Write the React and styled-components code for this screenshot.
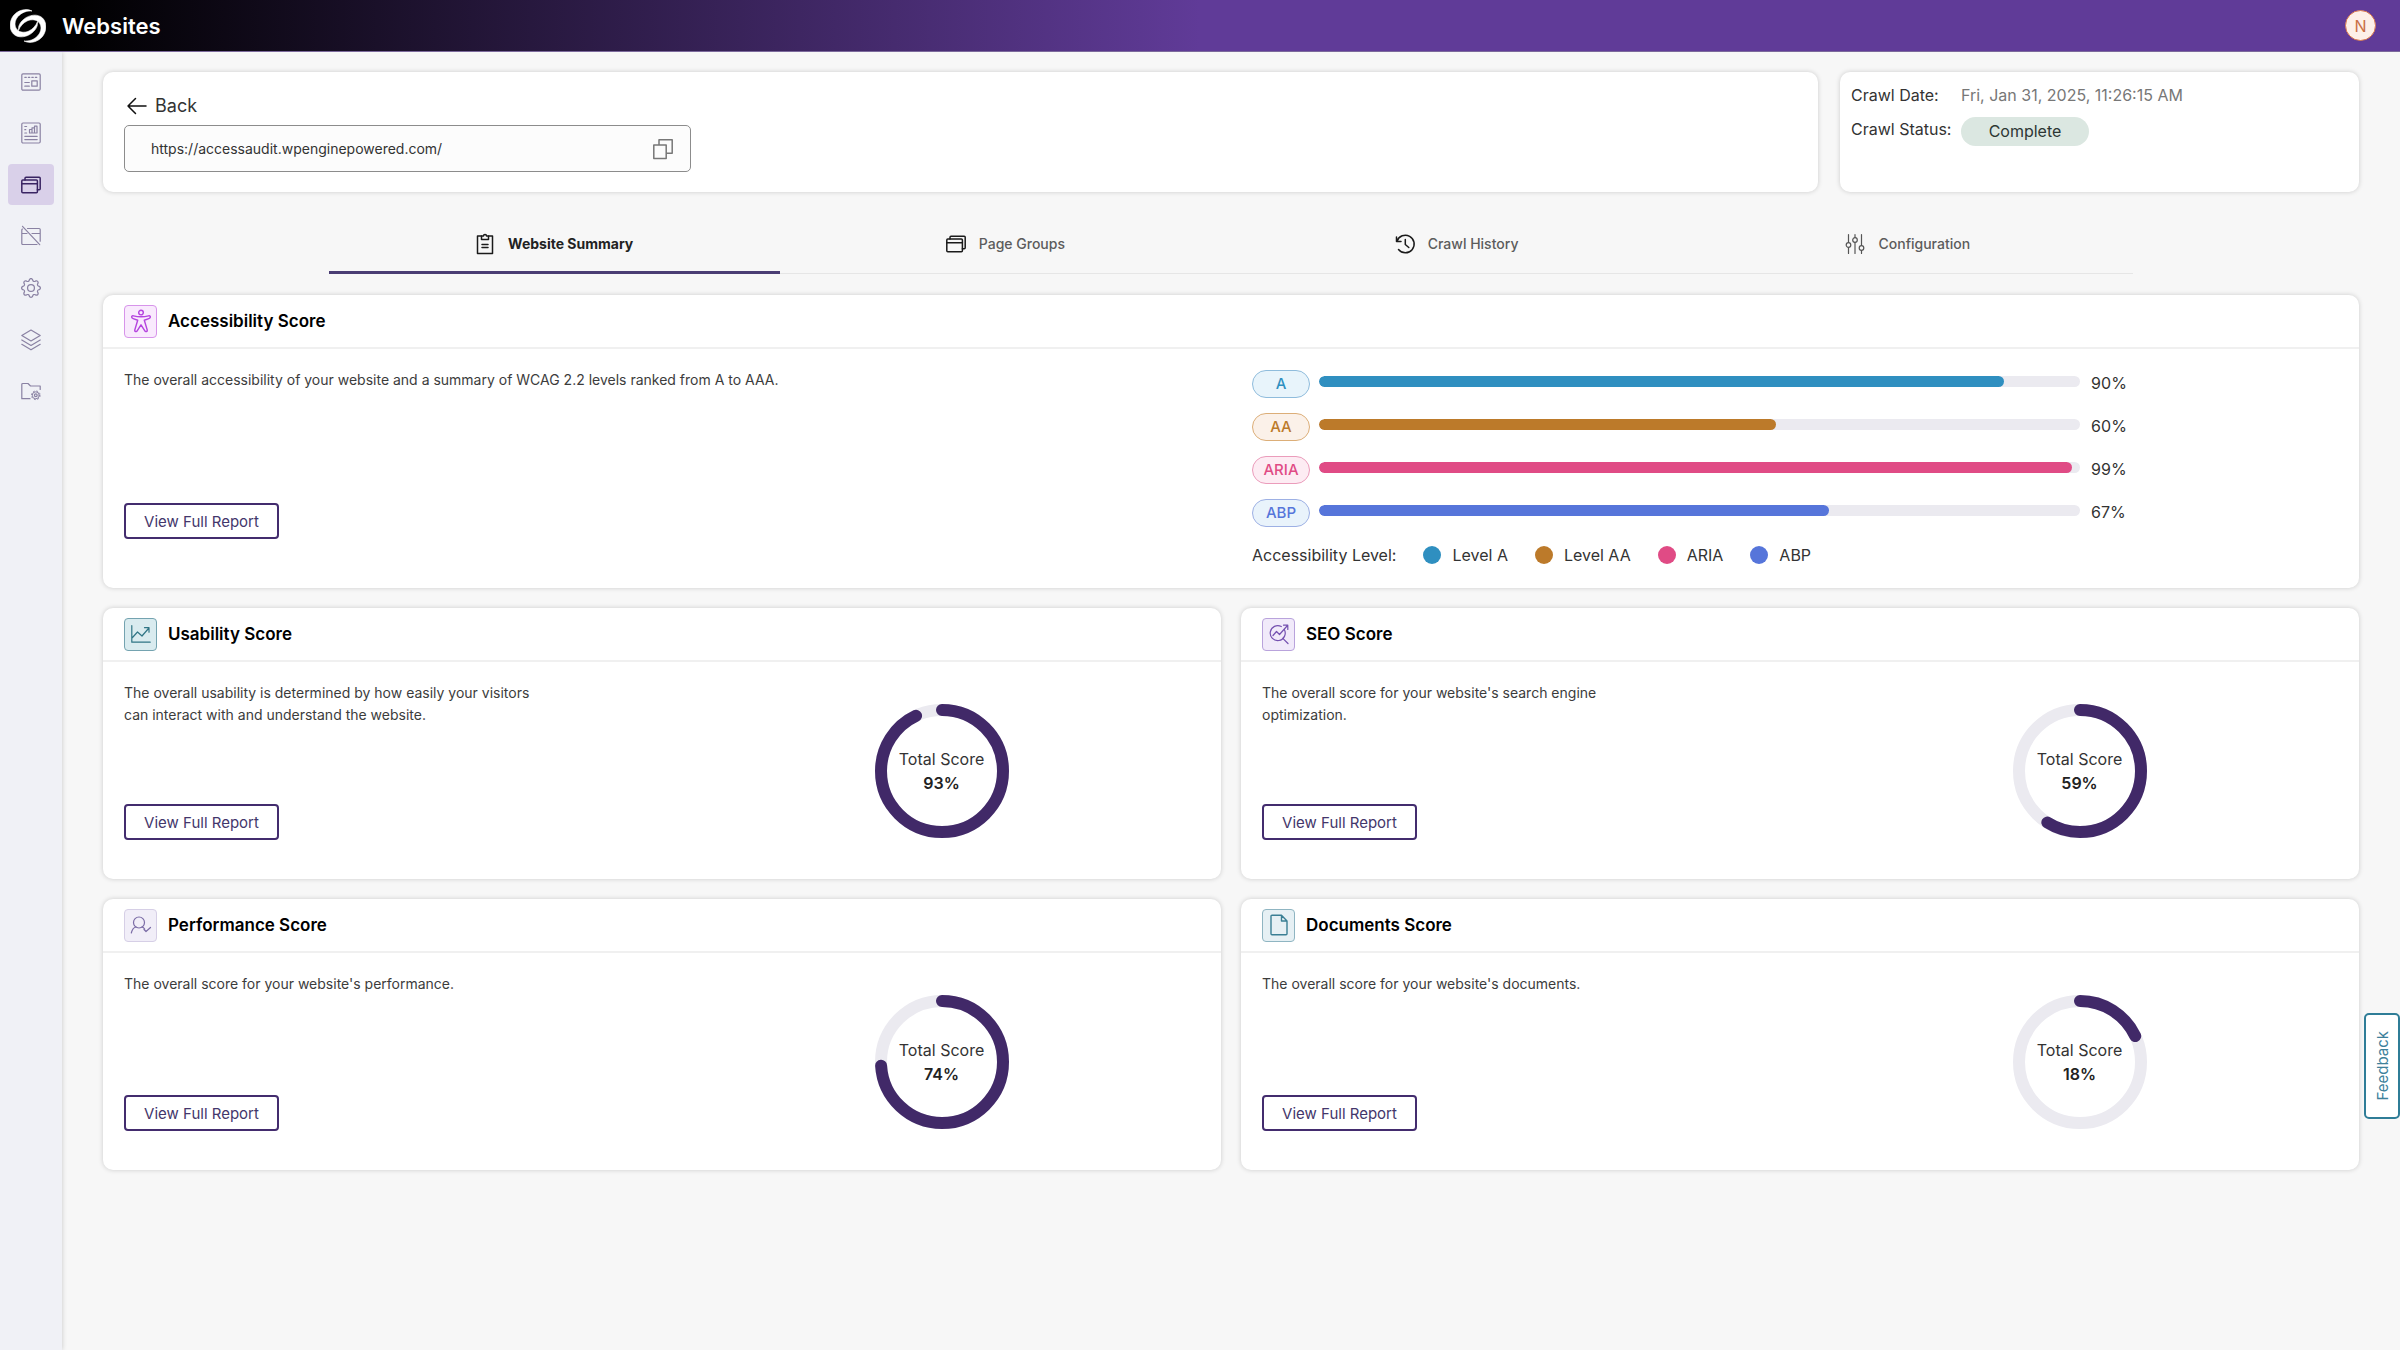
import { useState } from "react";
import styled, { createGlobalStyle } from "styled-components";
import { BsGear } from "react-icons/bs";

const GlobalStyle = createGlobalStyle`
  *, *::before, *::after {
    box-sizing: border-box;
  }
  body {
    margin: 0;
    background: #f7f7f7;
    color: #333;
    font-family: Inter, "Liberation Sans", sans-serif;
    font-size: 14px;
    line-height: 22px;
  }
  button, input {
    font-family: inherit;
  }
  h1, h2, p, dl, dd, ul {
    margin: 0;
    padding: 0;
  }
`;

const Page = styled.div`
  display: flex;
  flex-direction: column;
  min-height: 100vh;
`;

const TopBar = styled.header`
  display: flex;
  align-items: center;
  height: 52px;
  padding: 0 24px 0 10px;
  border-bottom: 1px solid #7c6a9c;
  background: linear-gradient(90deg, #000 3%, #603b98 50%);
  color: #fff;
`;

const PageTitle = styled.h1`
  margin-left: 16px;
  font-size: 22px;
  font-weight: 600;
  line-height: 28px;
`;

const Avatar = styled.button`
  width: 31px;
  height: 31px;
  margin-left: auto;
  padding: 0;
  border: 1px solid #d9794f;
  border-radius: 50%;
  background: #fdf0e8;
  color: #c96f45;
  font-size: 16px;
`;

const Shell = styled.div`
  display: flex;
  flex: 1;
`;

const Sidebar = styled.nav`
  flex: 0 0 62px;
  padding: 9px 8px;
  background: #f0f1f6;
  box-shadow: 0 0 5px rgba(0, 0, 0, 0.2);
  clip-path: inset(0 -8px 0 0);
`;

const NavList = styled.ul`
  display: flex;
  flex-direction: column;
  justify-content: space-between;
  height: 351px;
  list-style: none;
`;

const NavLink = styled.a`
  display: flex;
  align-items: center;
  justify-content: center;
  height: 41px;
  border-radius: 4px;
  background: ${({ $active }) => ($active ? "#d9d0e9" : "transparent")};
  color: ${({ $active }) => ($active ? "#3a2463" : "#8a82a3")};
`;

const Main = styled.main`
  flex: 1;
  min-width: 0;
  padding: 20px 41px;
`;

const Card = styled.section`
  border-radius: 10px;
  background: #fff;
  box-shadow: 0 0 5px rgba(0, 0, 0, 0.18);
`;

const TopCards = styled.div`
  display: grid;
  grid-template-columns: 76fr 23fr;
  gap: 22px;
`;

const SiteCard = styled(Card)`
  padding: 22px 21px 20px;
`;

const BackLink = styled.a`
  display: flex;
  align-items: center;
  gap: 8px;
  width: fit-content;
  padding-left: 3px;
  color: #333;
  font-size: 18px;
  line-height: 24px;
  text-decoration: none;
  svg {
    color: #111;
  }
`;

const UrlField = styled.div`
  display: flex;
  align-items: center;
  width: 567px;
  max-width: 100%;
  height: 47px;
  margin-top: 7px;
  padding: 0 13px 0 26px;
  border: 1px solid #8c8c8c;
  border-radius: 5px;
  background: #fcfcfc;
`;

const UrlInput = styled.input`
  flex: 1;
  min-width: 0;
  padding: 0;
  border: 0;
  outline: 0;
  background: transparent;
  color: #333;
  font-size: 14px;
`;

const CopyButton = styled.button`
  display: flex;
  padding: 4px;
  border: 0;
  background: none;
  color: #777;
`;

const CrawlCard = styled(Card)`
  padding: 11px;
`;

const CrawlInfo = styled.dl`
  display: grid;
  grid-template-columns: 110px 1fr;
  row-gap: 10px;
  font-size: 16px;
  line-height: 24px;
  dd {
    color: #777;
  }
`;

const StatusPill = styled.span`
  display: inline-block;
  min-width: 128px;
  border-radius: 15px;
  background: #dbe7e1;
  color: #2c3634;
  line-height: 29px;
  text-align: center;
`;

const Tabs = styled.div`
  display: grid;
  grid-template-columns: repeat(4, 1fr);
  width: 80%;
  margin: 20px auto 21px;
  border-bottom: 1px solid #e6e6e6;
`;

const Tab = styled.button`
  display: flex;
  align-items: center;
  justify-content: center;
  gap: 13px;
  height: 62px;
  margin-bottom: -1px;
  padding: 4px 0 0;
  border: 0;
  border-bottom: 3px solid ${({ $active }) => ($active ? "#4a3d74" : "transparent")};
  background: none;
  color: ${({ $active }) => ($active ? "#222" : "#5c5c5c")};
  font-size: 14px;
  font-weight: ${({ $active }) => ($active ? 700 : 500)};
  svg {
    color: ${({ $muted }) => ($muted ? "#555" : "#1a1a1a")};
  }
`;

const CardHeader = styled.div`
  display: flex;
  align-items: center;
  gap: 11px;
  height: 54px;
  padding: 0 21px;
  border-bottom: 2px solid #f0f0f0;
`;

const CardTitle = styled.h2`
  color: #000;
  font-size: 17px;
  font-weight: 600;
  line-height: 24px;
`;

const IconTile = styled.span`
  display: flex;
  align-items: center;
  justify-content: center;
  width: 33px;
  height: 33px;
  border: 1px solid ${({ $tone }) => $tone.border};
  border-radius: 4px;
  background: ${({ $tone }) => $tone.background};
  color: ${({ $tone }) => $tone.color};
`;

const CardBody = styled.div`
  display: grid;
  grid-template-columns: 1fr 1fr;
`;

const Summary = styled.div`
  padding: ${({ $tall }) => ($tall ? "20px 21px 49px" : "20px 21px 39px")};
`;

const Description = styled.p`
  max-width: ${({ $tall }) => ($tall ? "none" : "412px")};
  min-height: ${({ $tall }) => ($tall ? "134px" : "122px")};
  color: #3c3c3c;
`;

const ReportButton = styled.button`
  min-width: 155px;
  height: 36px;
  padding: 0 16px;
  border: 2px solid #432c6e;
  border-radius: 4px;
  background: #fff;
  color: #43366b;
  font-size: 15px;
`;

const ScoreGrid = styled.div`
  display: grid;
  grid-template-columns: 1fr 1fr;
  gap: 20px;
  margin-top: 20px;
`;

const RingBox = styled.div`
  display: grid;
  place-items: center;
  > * {
    grid-area: 1 / 1;
  }
`;

const RingText = styled.div`
  color: #333;
  font-size: 16px;
  line-height: 24px;
  text-align: center;
  strong {
    display: block;
    color: #222;
    font-weight: 600;
  }
`;

const Levels = styled.div`
  width: calc(79% - 16px);
  margin: 21px 0 0 21px;
`;

const LevelRow = styled.div`
  display: grid;
  grid-template-columns: 58px 1fr 36px;
  align-items: start;
  height: 28px;
  margin-bottom: 15px;
  font-size: 16px;
  line-height: 26px;
`;

const LevelBadge = styled.span`
  border: 1px solid ${({ $level }) => $level.border};
  border-radius: 14px;
  background: ${({ $level }) => $level.background};
  color: ${({ $level }) => $level.color};
  font-size: 15px;
  font-weight: 500;
  text-align: center;
`;

const Track = styled.div`
  height: 11px;
  margin: 6px 11px 0 9px;
  border-radius: 6px;
  background: #ebeaf0;
  overflow: hidden;
`;

const Fill = styled.div`
  height: 100%;
  border-radius: 6px;
  background: ${({ $color }) => $color};
`;

const Legend = styled.div`
  display: flex;
  align-items: center;
  gap: 27px;
  margin-top: 16px;
  font-size: 16px;
  line-height: 24px;
`;

const LegendItem = styled.span`
  display: flex;
  align-items: center;
  gap: 11px;
  &::before {
    content: "";
    width: 18px;
    height: 18px;
    border-radius: 50%;
    background: ${({ $color }) => $color};
  }
`;

const Feedback = styled.button`
  position: fixed;
  top: 75%;
  right: 0;
  width: 36px;
  height: 106px;
  padding: 0;
  border: 2px solid #2f7d97;
  border-radius: 5px;
  background: #fff;
  color: #3d819b;
  font-size: 15px;
  writing-mode: sideways-lr;
`;

function Icon({ size = 20, width = 1.2, children }) {
  return (
    <svg
      width={size}
      height={size}
      viewBox="0 0 20 20"
      fill="none"
      stroke="currentColor"
      strokeWidth={width}
      strokeLinecap="round"
      strokeLinejoin="round"
      overflow="visible"
      aria-hidden="true"
    >
      {children}
    </svg>
  );
}

function Logo() {
  return (
    <svg width="36" height="34" viewBox="0 0 36 34" fill="#fff" stroke="#fff" strokeWidth=".6" aria-hidden="true">
      <path d="M22 2C16-1 8 1 3.500 6.500C-1 12.500-1 20.500 3.500 25C8 29.500 17 28.500 22.500 23.500C26 20.500 28 17 27.500 12.500C26 16.500 23 20 19 22C14.500 24 9.500 23.500 7 20.500C4 17 4.500 11.500 8 7.500C11.500 3.500 17 1.500 22 2z" />
      <path d="M14 32C20 35 28 33 32.500 27.500C37 21.500 37 13.500 32.500 9C28 4.500 19 5.500 13.500 10.500C10 13.500 8 17 8.500 21.500C10 17.500 13 14 17 12C21.500 10 26.500 10.500 29 13.500C32 17 31.500 22.500 28 26.500C24.500 30.500 19 32.500 14 32z" />
    </svg>
  );
}

const dashboard = (
  <Icon>
    <rect x=".8" y="1.800" width="18.400" height="16.400" rx="1.200" />
    <path d="M3.800 5.300h1.500M7.300 5.300h1.500M10.800 5.300h1.500M14.300 5.300h1.500M3.800 10.500h4.500M3.800 14.200h4.500" />
    <rect x="10.800" y="8.800" width="5.400" height="5.400" />
  </Icon>
);

const report = (
  <Icon>
    <rect x=".8" y="0" width="18.400" height="20" rx="1.200" />
    <path d="M3.800 3.500h1.800M3.800 6.700h1M3.800 10h1.800M3.800 13.300h12.400M3.800 16.600h12.400" />
    <path d="M8.500 10V6.500H11V10zM11 6.500V4.800h2.500V10M13.500 4.800V3.200H16V10H8.500" />
  </Icon>
);

const windowsShape = (
  <>
    <rect x=".8" y="5" width="15.600" height="12.700" rx="1" />
    <path d="M.8 8.700h15.600M4 5V3.300a1 1 0 0 1 1-1h13.200a1 1 0 0 1 1 1v10.400a1 1 0 0 1-1 1h-1.800" />
  </>
);

const blocked = (
  <Icon>
    <path d="M1.500.3l17.200 18.400M1.500 3a1 1 0 0 0-.7 1v13.500a1 1 0 0 0 1 1H16M6.500 2.500H18.200a1 1 0 0 1 1 1v11.700M.8 7.500H6M11 7.500h8" />
  </Icon>
);

const layers = (
  <Icon>
    <path d="M10 0l9.200 5.500L10 11 .8 5.500zM.8 10L10 15.500 19.200 10M.8 14.300L10 19.800l9.200-5.500" />
  </Icon>
);

const folder = (
  <Icon>
    <path d="M9 17.700H.8V3.500a1 1 0 0 1 1-1H7L9.500 5h9.700v3.500" />
    <circle cx="14.800" cy="14.300" r="1.400" />
    <circle cx="14.800" cy="14.300" r="3.500" strokeWidth="1" />
    <circle cx="14.800" cy="14.300" r="4.300" strokeWidth="1" strokeDasharray="1.700 1.680" strokeLinecap="butt" />
  </Icon>
);

const NAV = [
  { label: "Dashboard", icon: dashboard },
  { label: "Reports", icon: report },
  { label: "Websites", icon: <Icon width={1.5}>{windowsShape}</Icon>, active: true },
  { label: "Exclusions", icon: blocked },
  { label: "Settings", icon: <BsGear size={20} /> },
  { label: "Layers", icon: layers },
  { label: "Files", icon: folder },
];

const TABS = [
  {
    label: "Website Summary",
    icon: (
      <Icon width={1.5}>
        <path d="M6.500 2H2.500v17.500h15V2h-4" />
        <path d="M6.500 5.500V2h2a1.500 1.500 0 0 1 3 0h2v3.500zM7 10.500h6M7 13.500h6" />
      </Icon>
    ),
  },
  { label: "Page Groups", icon: <Icon width={1.5}>{windowsShape}</Icon> },
  {
    label: "Crawl History",
    icon: (
      <Icon width={1.5}>
        <path d="M1.500 3v4.500H6M2 7.300A8.800 8.800 0 1 1 3.500 15.500M10.300 5.500v5l3.500 3" />
      </Icon>
    ),
  },
  {
    label: "Configuration",
    muted: true,
    icon: (
      <Icon>
        <path d="M3.500.5v8M3.500 13.500v6M10 .5v3M10 8.500v11M16.500.5v11M16.500 16.500v3" />
        <circle cx="3.500" cy="11" r="2.300" />
        <circle cx="10" cy="6" r="2.300" />
        <circle cx="16.500" cy="14" r="2.300" />
      </Icon>
    ),
  },
];

const LEVELS = [
  { name: "A", legend: "Level A", value: 90, color: "#2f8fc0", border: "#8fbcdc", background: "#e8f4fb" },
  { name: "AA", legend: "Level AA", value: 60, color: "#bc7a2a", border: "#dcae78", background: "#fbf1e9" },
  { name: "ARIA", legend: "ARIA", value: 99, color: "#e04b85", border: "#eb9cbb", background: "#fdecf3" },
  { name: "ABP", legend: "ABP", value: 67, color: "#5675da", border: "#9db0e4", background: "#e9f3fb" },
];

const SCORES = [
  {
    title: "Usability Score",
    text: "The overall usability is determined by how easily your visitors can interact with and understand the website.",
    value: 93,
    tone: { color: "#2f7585", border: "#74a3b0", background: "#d9ebef" },
    icon: (
      <Icon>
        <path d="M.8 1.500v16.700h18.400M1.500 13.500l5-5.500 4.500 4 6.500-7.500M13.500 3.700h4.500v4.500" />
      </Icon>
    ),
  },
  {
    title: "SEO Score",
    text: "The overall score for your website's search engine optimization.",
    value: 59,
    tone: { color: "#7450b0", border: "#b9a3dc", background: "#f1eafa" },
    icon: (
      <Icon>
        <path d="M15.300 5.500a7.500 7.500 0 1 1-3-3M14.300 14.800l4.700 4.700M4 11.500l3.500-4 3 3L18.500 1.500M14.500 1.200h4.300v4.300" />
      </Icon>
    ),
  },
  {
    title: "Performance Score",
    text: "The overall score for your website's performance.",
    value: 74,
    tone: { color: "#7b6ca6", border: "#d6cfe6", background: "#f1eef8" },
    icon: (
      <Icon>
        <circle cx="8" cy="7.500" r="5.500" />
        <path d="M.3 18c.8-3.500 2.500-5.500 4.700-6M11 12c1.500.5 2 1 2.700 2M13 14.500l2 2 4.500-4" />
      </Icon>
    ),
  },
  {
    title: "Documents Score",
    text: "The overall score for your website's documents.",
    value: 18,
    tone: { color: "#3a7f94", border: "#8fb5c2", background: "#e6f0f4" },
    icon: (
      <Icon width={1.4}>
        <path d="M12.500.3H3a1 1 0 0 0-1 1v17.400a1 1 0 0 0 1 1h14a1 1 0 0 0 1-1V6zM12.500.3V6H18" />
      </Icon>
    ),
  },
];

const PERSON_TONE = { color: "#b544df", border: "#d794ea", background: "#f9eafd" };

const RADIUS = 61;

function Ring({ value }) {
  return (
    <RingBox>
      <svg width="134" height="134" viewBox="0 0 134 134" fill="none" strokeWidth="12" aria-hidden="true">
        <circle cx="67" cy="67" r={RADIUS} stroke="#ebeaf0" />
        <circle
          cx="67"
          cy="67"
          r={RADIUS}
          stroke="#412968"
          strokeLinecap="round"
          pathLength="100"
          strokeDasharray={`${value} 100`}
          transform="rotate(-90 67 67)"
        />
      </svg>
      <RingText>
        Total Score
        <strong>{value}%</strong>
      </RingText>
    </RingBox>
  );
}

function ScoreCard({ title, text, value, tone, icon }) {
  return (
    <Card>
      <CardHeader>
        <IconTile $tone={tone}>{icon}</IconTile>
        <CardTitle>{title}</CardTitle>
      </CardHeader>
      <CardBody>
        <Summary>
          <Description>{text}</Description>
          <ReportButton type="button">View Full Report</ReportButton>
        </Summary>
        <Ring value={value} />
      </CardBody>
    </Card>
  );
}

function AccessibilityCard() {
  return (
    <Card>
      <CardHeader>
        <IconTile $tone={PERSON_TONE}>
          <Icon size={22} width={1.3}>
            <circle cx="10" cy="2.300" r="2.100" />
            <path d="M1.500 6.300c0-1 .9-1.200 1.700-1 4.300 1.100 9.300 1.100 13.600 0 .8-.2 1.700 0 1.700 1s-.6 1.200-1.400 1.500l-4.100 1.500 2.700 9c.3 1.200-1.600 1.900-2.200.7L10 13.500 6.500 19c-.6 1.200-2.500.5-2.200-.7l2.700-9-4.100-1.500c-.8-.3-1.400-.5-1.400-1.500z" />
          </Icon>
        </IconTile>
        <CardTitle>Accessibility Score</CardTitle>
      </CardHeader>
      <CardBody>
        <Summary $tall>
          <Description $tall>
            The overall accessibility of your website and a summary of WCAG 2.2 levels ranked from A to AAA.
          </Description>
          <ReportButton type="button">View Full Report</ReportButton>
        </Summary>
        <Levels>
          {LEVELS.map((level) => (
            <LevelRow key={level.name}>
              <LevelBadge $level={level}>{level.name}</LevelBadge>
              <Track>
                <Fill $color={level.color} style={{ width: `${level.value}%` }} />
              </Track>
              <span>{level.value}%</span>
            </LevelRow>
          ))}
          <Legend>
            <span>Accessibility Level:</span>
            {LEVELS.map((level) => (
              <LegendItem key={level.name} $color={level.color}>
                {level.legend}
              </LegendItem>
            ))}
          </Legend>
        </Levels>
      </CardBody>
    </Card>
  );
}

export default function App() {
  const [tab, setTab] = useState("Website Summary");

  return (
    <Page>
      <GlobalStyle />
      <TopBar>
        <Logo />
        <PageTitle>Websites</PageTitle>
        <Avatar type="button">N</Avatar>
      </TopBar>
      <Shell>
        <Sidebar>
          <NavList>
            {NAV.map(({ label, icon, active }) => (
              <li key={label}>
                <NavLink href="#" aria-label={label} $active={active}>
                  {icon}
                </NavLink>
              </li>
            ))}
          </NavList>
        </Sidebar>
        <Main>
          <TopCards>
            <SiteCard>
              <BackLink href="#">
                <Icon width={1.5}>
                  <path d="M19 10H1M8.500 2.500L1 10l7.500 7.500" />
                </Icon>
                Back
              </BackLink>
              <UrlField>
                <UrlInput aria-label="Website URL" readOnly value="https://accessaudit.wpenginepowered.com/" />
                <CopyButton type="button" aria-label="Copy URL">
                  <Icon width={1.5}>
                    <path d="M.8 6h12.400v13.500H.8zM6 6V.8h13.200v13.400h-6" />
                  </Icon>
                </CopyButton>
              </UrlField>
            </SiteCard>
            <CrawlCard>
              <CrawlInfo>
                <dt>Crawl Date:</dt>
                <dd>Fri, Jan 31, 2025, 11:26:15 AM</dd>
                <dt>Crawl Status:</dt>
                <dd>
                  <StatusPill>Complete</StatusPill>
                </dd>
              </CrawlInfo>
            </CrawlCard>
          </TopCards>
          <Tabs role="tablist">
            {TABS.map(({ label, icon, muted }) => (
              <Tab
                key={label}
                type="button"
                role="tab"
                aria-selected={tab === label}
                $active={tab === label}
                $muted={muted}
                onClick={() => setTab(label)}
              >
                {icon}
                {label}
              </Tab>
            ))}
          </Tabs>
          <AccessibilityCard />
          <ScoreGrid>
            {SCORES.map((score) => (
              <ScoreCard key={score.title} {...score} />
            ))}
          </ScoreGrid>
        </Main>
      </Shell>
      <Feedback type="button">Feedback</Feedback>
    </Page>
  );
}
